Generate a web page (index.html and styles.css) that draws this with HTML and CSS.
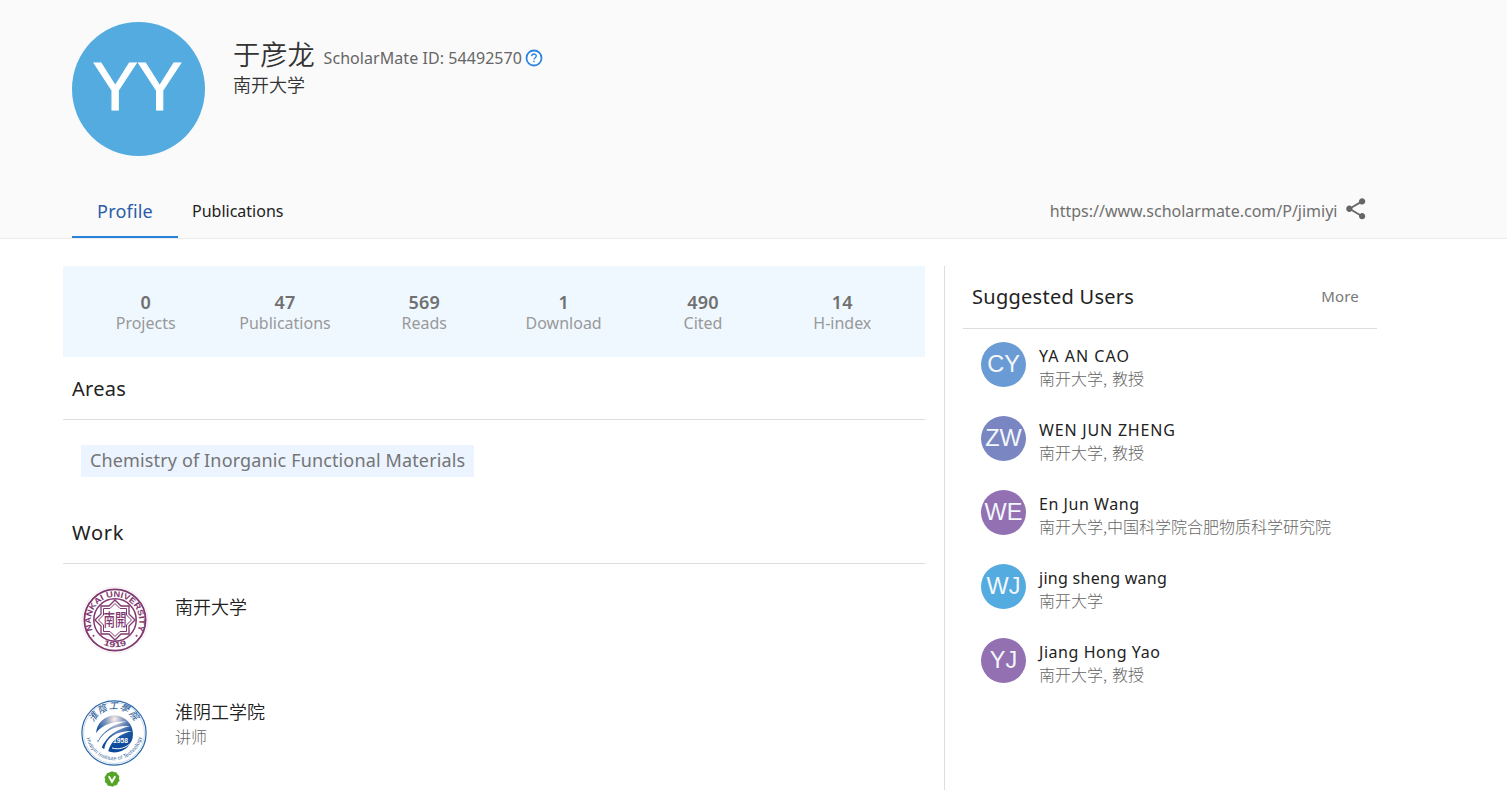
FILE: index.html
```html
<!DOCTYPE html>
<html lang="en">
<head>
<meta charset="utf-8">
<title>于彦龙 - ScholarMate</title>
<link rel="stylesheet" href="styles.css">
</head>
<body>
<header class="header">
  <div class="identity">
    <svg class="avatar" width="133" height="134" viewBox="0 0 133 134">
      <ellipse cx="66.5" cy="67" rx="66.5" ry="67" fill="#54abe0"/>
      <g class="avatar-text" font-size="68" text-anchor="middle">
        <text x="43.2" y="88.3">Y</text>
        <text x="87.8" y="88.3">Y</text>
      </g>
    </svg>
    <div class="identity-info">
      <div class="name-row">
        <h1 class="name">于彦龙</h1>
        <span class="sid">ScholarMate ID: 54492570</span>
        <svg class="help" width="18" height="18" viewBox="0 0 18 18">
          <circle cx="9" cy="9" r="7.5" fill="#fff" stroke="#2e86de" stroke-width="1.8"/>
          <path d="M6.7 7.3C6.7 4.3 11.3 4.3 11.3 7.1C11.3 8.7 9 8.8 9 10.6M9 11.8V13.2" fill="none" stroke="#2e86de" stroke-width="1.4"/>
        </svg>
      </div>
      <div class="school">南开大学</div>
    </div>
  </div>
  <nav class="nav">
    <a class="tab tab-active"><span>Profile</span></a>
    <a class="tab"><span>Publications</span></a>
    <div class="share">
      <span class="url">https://www.scholarmate.com/P/jimiyi</span>
      <svg class="share-icon" width="25.5" height="25.5" viewBox="0 0 24 24"><path fill="#666" d="M18 16.08c-.76 0-1.44.3-1.96.77L8.91 12.7c.05-.23.09-.46.09-.7s-.04-.47-.09-.7l7.05-4.11c.54.5 1.25.81 2.04.81 1.66 0 3-1.34 3-3s-1.34-3-3-3-3 1.34-3 3c0 .24.04.47.09.7L8.04 9.81C7.5 9.31 6.79 9 6 9c-1.66 0-3 1.34-3 3s1.34 3 3 3c.79 0 1.5-.31 2.04-.81l7.12 4.16c-.05.21-.08.43-.08.65 0 1.61 1.31 2.92 2.92 2.92s2.92-1.31 2.92-2.92-1.31-2.92-2.92-2.92z"/></svg>
    </div>
  </nav>
</header>
<main class="main">
  <div class="content">
    <section class="stats">
      <div class="stat"><b>0</b><span>Projects</span></div>
      <div class="stat"><b>47</b><span>Publications</span></div>
      <div class="stat"><b>569</b><span>Reads</span></div>
      <div class="stat"><b>1</b><span>Download</span></div>
      <div class="stat"><b>490</b><span>Cited</span></div>
      <div class="stat"><b>14</b><span>H-index</span></div>
    </section>
    <section class="areas">
      <h2 class="heading h-areas">Areas</h2>
      <div class="tags"><span class="tag">Chemistry of Inorganic Functional Materials</span></div>
    </section>
    <section class="work">
      <h2 class="heading h-work">Work</h2>
      <div class="job job-first">
        <svg class="logo" width="68" height="68" viewBox="0 0 68 68">
          <defs>
            <path id="nk-top" d="M12 45.2A24.2 24.2 0 1 1 56 45.2"/>
            <path id="nk-bottom" d="M15 54A28.6 28.6 0 0 0 53 54"/>
          </defs>
          <circle cx="34" cy="34" r="33" fill="#fff" stroke="#eee6ec" stroke-width=".8"/>
          <g fill="none" stroke="#81386f">
            <circle cx="34" cy="34" r="30.6" stroke-width="1.8"/>
            <circle cx="34" cy="34" r="21.2" stroke-width="1.5"/>
            <path stroke-width="1.3" d="M34 14L40 20H48V28L54 34L48 40V48H40L34 54L28 48H20V40L14 34L20 28V20H28Z"/>
            <path stroke-width="1" d="M34 17.5L39 22.5H45.5V29L50.5 34L45.5 39V45.5H39L34 50.5L29 45.5H22.5V39L17.5 34L22.5 29V22.5H29Z"/>
          </g>
          <g fill="#81386f">
            <text class="seal-text" font-size="8.2"><textPath href="#nk-top" startOffset="1" textLength="95" lengthAdjust="spacingAndGlyphs">NANKAI UNIVERSITY</textPath></text>
            <text class="seal-text" font-size="7.6"><textPath href="#nk-bottom" startOffset="50%" text-anchor="middle" textLength="24" lengthAdjust="spacingAndGlyphs">1919</textPath></text>
            <text class="seal-cjk" x="34" y="37.6" font-size="11.5" text-anchor="middle" transform="translate(0 -16) scale(1 1.48)">南開</text>
            <circle cx="12.5" cy="49.8" r="1"/><circle cx="55.5" cy="49.8" r="1"/>
          </g>
        </svg>
        <div class="job-info"><div class="job-name">南开大学</div></div>
      </div>
      <div class="job">
        <div class="logo-col">
          <svg class="logo" width="68" height="68" viewBox="0 0 68 68">
            <defs>
              <radialGradient id="globe" cx="50%" cy="10%" r="80%">
                <stop offset="0" stop-color="#fff0e8"/><stop offset=".3" stop-color="#8398bf"/><stop offset=".65" stop-color="#1b56a0"/><stop offset="1" stop-color="#0a489b"/>
              </radialGradient>
              <path id="hy-top" d="M13.6 24.5A22 22 0 0 1 55 24.5"/>
              <path id="hy-bottom" d="M6.4 38A28 28 0 0 0 61.6 38"/>
            </defs>
            <circle cx="34" cy="34" r="32.1" fill="#fff" stroke="#2b67a8" stroke-width="1.2"/>
            <circle cx="34" cy="34" r="30.5" fill="none" stroke="#a8c1de" stroke-width=".6"/>
            <circle cx="34.5" cy="35" r="18.5" fill="url(#globe)"/>
            <g fill="#fff">
              <path d="M14 38C19 26 32 22 47 22.5C34 25 24 31 18 42Z"/>
              <path d="M17 46C21 33 34 26 50 27C37 30 27 36 21 50Z"/>
              <path d="M24 51C26 38 36 32 52 32C40 35 31 41 28 53Z"/>
            </g>
            <path d="M32 49C39 51 46 49 52 43" fill="none" stroke="#fff"/>
            <g fill="#3667a0">
              <text class="seal-brush" font-size="9"><textPath href="#hy-top" startOffset="1" textLength="50">淮陰工學院</textPath></text>
              <text class="seal-sans" font-size="5.4"><textPath href="#hy-bottom" startOffset="1" textLength="77">Huaiyin Institute of Technology</textPath></text>
            </g>
            <text class="seal-text" x="40.5" y="44.2" font-size="6.7" fill="#fff" text-anchor="middle" textLength="15">1958</text>
          </svg>
          <svg class="verified" width="16" height="16" viewBox="0 0 16 16">
            <path d="M8 .3L10.1 1L12.5 1.4L13.6 3.4L15.3 5L15 7.6L15.6 9.8L14 11.6L13 13.9L10.7 14.5L8.6 15.8L6.5 15L3.9 14.7L2.7 12.6L.8 10.9L1.2 8.5L.4 6.2L2 4.3L2.9 2.2L5.2 1.6Z" fill="#55a425"/>
            <path d="M4.8 5.2L8 10.8L11.2 5.2" fill="none" stroke="#fff" stroke-width="1.9"/>
          </svg>
        </div>
        <div class="job-info"><div class="job-name">淮阴工学院</div><div class="job-title">讲师</div></div>
      </div>
    </section>
  </div>
  <aside class="side">
    <div class="side-head"><h2 class="side-title">Suggested Users</h2><a class="more">More</a></div>
    <ul class="users">
      <li class="user"><span class="pic pic-cy">CY</span><div><div class="user-name caps-wide">YA AN CAO</div><div class="user-org">南开大学, 教授</div></div></li>
      <li class="user"><span class="pic pic-zw">ZW</span><div><div class="user-name caps">WEN JUN ZHENG</div><div class="user-org">南开大学, 教授</div></div></li>
      <li class="user"><span class="pic pic-we">WE</span><div><div class="user-name">En Jun Wang</div><div class="user-org">南开大学,中国科学院合肥物质科学研究院</div></div></li>
      <li class="user"><span class="pic pic-wj">WJ</span><div><div class="user-name lower">jing sheng wang</div><div class="user-org">南开大学</div></div></li>
      <li class="user"><span class="pic pic-yj">YJ</span><div><div class="user-name">Jiang Hong Yao</div><div class="user-org">南开大学, 教授</div></div></li>
    </ul>
  </aside>
</main>
</body>
</html>
```
FILE: styles.css
```css
* { box-sizing: border-box; margin: 0; padding: 0; }
body {
  height: 790px;
  overflow: hidden;
  background: #fff;
  color: #222;
  font-family: "Noto Sans", "Noto Sans CJK SC", sans-serif;
  font-size: 16px;
}
h1, h2 { font-weight: 400; }

.header {
  display: flex;
  flex-direction: column;
  justify-content: space-between;
  height: 239px;
  padding: 22px 130px 0 72px;
  background: #fafafa;
  border-bottom: 1px solid #ececec;
}
.identity { display: flex; gap: 28px; }
.avatar { display: block; }
.avatar-text { fill: #fff; stroke: #fff; stroke-width: .9px; font-family: "Liberation Sans", sans-serif; }
.identity-info { padding-top: 11px; }
.name-row { display: flex; align-items: center; height: 42px; }
.name { margin-right: 9px; padding-bottom: 2px; font-family: "Noto Sans CJK SC", sans-serif; font-weight: 350; font-size: 27.2px; line-height: 40px; color: #333; }
.sid { padding-top: 7px; font-size: 16px; letter-spacing: .06px; line-height: 24px; color: #666; }
.help { margin: 8px 0 0 3px; }
.school { font-family: "Noto Sans CJK SC", sans-serif; font-weight: 350; font-size: 18px; line-height: 18px; color: #333; }

.nav { display: flex; height: 54px; }
.tab { display: flex; justify-content: center; line-height: 54px; color: #222; }
.tab-active { width: 106px; margin-right: 14px; border-bottom: 2px solid #2882d8; color: #2a5caa; font-size: 18px; letter-spacing: .2px; }
.share { display: flex; margin-left: auto; padding-right: 9px; color: #707070; line-height: 54px; }
.share-icon { margin: 12px 0 0 5px; }

.main { display: flex; height: 551px; padding: 27px 130px 0 63px; }
.content { width: 862px; margin-right: 19px; flex: none; }
.stats { display: flex; height: 91px; padding: 26px 13px 0; background: #eff7ff; }
.stat { display: flex; flex-direction: column; flex: 1; align-items: center; line-height: 21px; color: #999; }
.stat b { font-size: 18px; font-weight: 600; letter-spacing: .2px; color: #707070; }
.heading { height: 63px; padding-left: 9px; border-bottom: 1px solid #ddd; font-size: 20px; line-height: 63px; color: #222; }
.h-areas { letter-spacing: .3px; }
.h-work { letter-spacing: .7px; }
.tags { display: flex; height: 81px; padding: 25px 18px 0; }
.tag { height: 32px; padding: 0 9px; background: #ebf4ff; font-size: 18px; letter-spacing: .14px; line-height: 31px; color: #757575; }
.job { display: flex; gap: 27px; padding: 0 17px; }
.job-first { height: 135px; padding: 22px 17px 0 18px; gap: 26px; }
.logo { display: block; flex: none; }
.logo-col { width: 68px; }
.verified { display: block; margin: 4px 0 0 24px; }
.job-info { padding-top: 8px; font-family: "Noto Sans CJK SC", sans-serif; font-weight: 350; }
.job:not(.job-first) .job-info { padding-top: 0; }
.job-name { font-size: 18px; line-height: 25px; color: #222; }
.job-title { font-size: 16px; line-height: 25px; font-weight: 300; color: #666; }
.seal-text { font-family: "Liberation Sans", sans-serif; font-weight: 700; }
.seal-cjk { font-family: "Noto Sans CJK TC", sans-serif; font-weight: 500; }
.seal-brush { font-family: "Noto Sans CJK TC", sans-serif; font-style: italic; font-weight: 500; }
.seal-sans { font-family: "Liberation Sans", sans-serif; }

.side { width: 433px; padding-left: 18px; border-left: 1px solid #ddd; }
.side-head { display: flex; justify-content: space-between; height: 63px; padding: 0 18px 0 9px; border-bottom: 1px solid #ddd; line-height: 62px; }
.side-title { font-size: 20px; letter-spacing: .27px; color: #222; }
.more { font-size: 15px; letter-spacing: .2px; line-height: 60px; color: #777; }
.users { padding: 13px 0 0 18px; list-style: none; }
.user { display: flex; gap: 13px; height: 74px; }
.pic {
  width: 45px; height: 45px; flex: none;
  border-radius: 50%;
  color: #f3f6fb;
  font: 23.5px/45px "Liberation Sans", sans-serif;
  text-align: center;
  white-space: nowrap;
}
.pic-cy { background: #6a9bd4; }
.pic-zw { background: #7986c2; }
.pic-we, .pic-yj { background: #9270b1; }
.pic-wj { background: #54abe0; }
.user-name { padding-top: 2px; line-height: 24px; letter-spacing: .55px; color: #222; }
.caps-wide { letter-spacing: 1.05px; }
.caps { letter-spacing: .8px; }
.lower { letter-spacing: .28px; }
.user-org { font-family: "Noto Sans CJK SC", sans-serif; font-weight: 300; font-size: 16px; line-height: 20px; word-spacing: 1.5px; color: #666; }
```
